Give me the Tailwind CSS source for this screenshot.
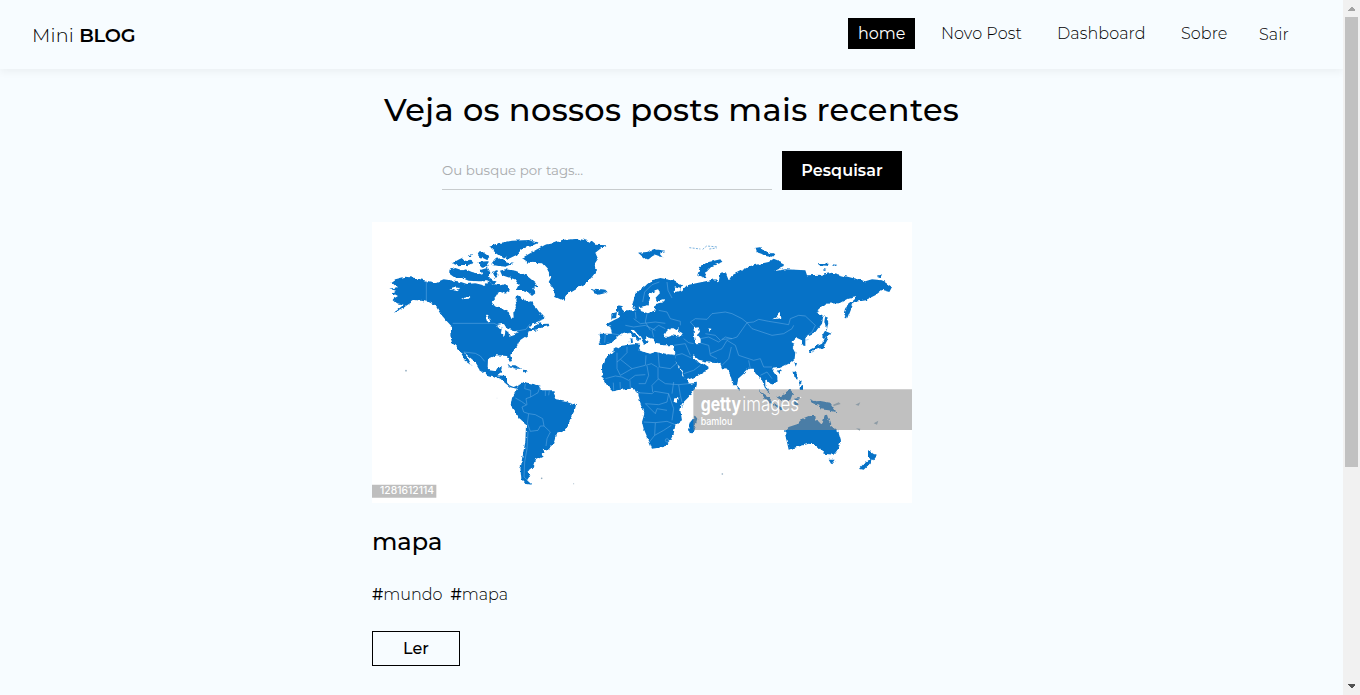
<!DOCTYPE html>
<html lang="pt-BR">
<head>
<meta charset="utf-8">
<title>Mini Blog</title>
<script src="https://cdn.jsdelivr.net/npm/@tailwindcss/browser@4"></script>
</head>
<body class="flex h-[695px] w-[1360px] overflow-hidden bg-[#f7fcff] font-[Montserrat,Inter,sans-serif] text-black">
<div class="flex h-full w-[1343px] flex-col">
  <header class="flex h-[69px] shrink-0 justify-between pr-[54px] pl-8 shadow-[0_3px_8px_rgba(0,0,0,0.05)]">
    <a class="mt-[23px] h-6 text-[19.2px] leading-6 font-light whitespace-pre"><span class="tracking-[0.2px]">Mini </span><span class="font-semibold tracking-[-0.2px]">BLOG</span></a>
    <nav class="flex pt-[18px] text-base leading-[31px] font-light tracking-[0.08px] whitespace-nowrap">
      <a class="h-[31px] w-[67px] bg-black pl-2.5 font-normal tracking-normal text-white"><span>home</span></a>
      <a class="ml-[26px] w-[116px]"><span>Novo Post</span></a>
      <a class="w-[124px]"><span>Dashboard</span></a>
      <a class="w-[78px]"><span>Sobre</span></a>
      <a class="mt-px w-[30px]"><span>Sair</span></a>
    </nav>
  </header>
  <main class="flex flex-col pl-[372px]">
    <h1 class="mt-[21px] ml-3 h-10 text-[32px] leading-10 font-medium tracking-[0.33px] whitespace-nowrap"><span>Veja os nossos posts mais recentes</span></h1>
    <form class="mt-[21px] ml-[70px] flex h-[39px] gap-2.5">
      <div class="w-[330px] border-b border-[#c8ccce] text-[13.33px] leading-[38px] text-[#a9abad]"><span>Ou busque por tags...</span></div>
      <button type="button" class="w-[120px] bg-black text-base font-semibold tracking-[0.08px] text-white"><span>Pesquisar</span></button>
    </form>
    <article class="mt-8 flex flex-col">
      <svg class="h-[281px] w-[540px]" viewBox="0 0 1620 843">
        <defs><filter id="coast" x="0" y="0" width="1620" height="843" filterUnits="userSpaceOnUse" color-interpolation-filters="sRGB"><feTurbulence type="fractalNoise" baseFrequency=".07" numOctaves="2" seed="4"/><feDisplacementMap in="SourceGraphic" scale="12" xChannelSelector="R" yChannelSelector="G"/><feGaussianBlur stdDeviation="1"/></filter></defs>
        <rect width="1620" height="843" fill="#fff"/>
        <g fill="#0672c7" filter="url(#coast)">
          <path d="M70 172L100 164 130 168 163 176 190 182 215 172 235 175 260 178 285 186 310 184 335 190 350 180 365 186 385 190 400 186 410 200 400 215 380 208 372 222 358 238 365 250 392 262 410 270 418 290 425 290 424 268 435 255 430 235 432 218 450 226 462 240 478 238 488 250 500 268 520 290 500 298 480 306 470 316 480 322 500 300 512 306 530 305 532 312 505 318 490 326 470 328 466 340 445 354 438 370 420 388 415 400 420 417 413 419 405 402 375 400 360 406 348 412 347 435 352 445 372 448 378 438 390 436 385 452 375 460 405 462 405 478 412 490 425 495 440 488 434 500 415 496 400 484 385 470 370 464 345 458 325 445 310 420 300 412 275 390 290 412 298 428 280 415 262 385 240 362 235 340 238 312 222 295 205 275 190 250 170 240 130 234 105 250 85 265 65 272 95 248 75 244 62 232 78 222 60 212 72 206 52 200 75 196 58 180Z"/>
          <path d="M232 145L250 138 270 145 280 142 300 150 325 156 350 166 375 180 362 186 345 178 318 178 290 176 270 168 250 168 232 155ZM240 124L262 112 275 106 280 116 300 120 290 128 255 130ZM276 122L300 114 308 124 285 130ZM288 100L300 96 294 106ZM314 92L332 90 352 104 345 114 325 104ZM316 120L345 118 350 132 330 134ZM325 144L345 138 355 155 350 168 332 160ZM358 128L372 110 390 108 402 120 424 126 402 134 380 132ZM360 150L376 144 380 160 368 168ZM352 74L380 64 420 56 470 54 500 62 478 72 450 80 435 98 410 110 390 104 372 92 360 84ZM384 146L400 142 430 146 455 156 470 166 490 182 496 194 484 198 490 214 480 222 465 208 450 204 432 204 440 188 428 172 408 166 390 160ZM388 198L402 190 414 204 400 212Z"/>
          <path d="M450 108L490 85 520 68 545 64 570 54 620 50 660 60 670 68 705 70 685 80 670 92 678 110 665 130 675 145 660 165 640 185 610 200 590 212 575 236 550 225 545 200 530 180 538 165 525 140 510 124 470 122ZM660 205L672 200 700 203 706 209 698 214 680 218 664 213ZM798 92L825 90 845 82 880 86 860 92 872 106 850 98 842 102 830 112 822 112ZM976 158L988 130 1010 120 1045 112 1052 121 1020 132 1006 147 998 167Z"/>
          <path d="M785 235L790 215 815 195 840 175 865 168 900 175 930 190 925 200 905 195 910 210 930 205 945 190 965 185 990 180 1030 172 1040 180 1045 152 1060 150 1070 175 1080 160 1110 145 1135 132 1190 120 1205 110 1235 122 1235 135 1205 148 1240 142 1300 145 1305 160 1350 158 1380 152 1430 165 1480 178 1500 172 1530 175 1560 195 1552 210 1530 204 1510 220 1480 235 1445 240 1435 265 1425 290 1416 275 1420 255 1445 235 1455 225 1430 230 1405 244 1360 245 1340 265 1333 270 1355 280 1350 305 1330 330 1310 340 1300 350 1300 372 1290 370 1290 355 1275 348 1258 360 1268 366 1262 375 1270 390 1268 410 1250 425 1225 437 1200 440 1215 462 1217 475 1205 488 1195 485 1180 470 1180 490 1195 515 1185 510 1175 485 1165 465 1155 460 1145 440 1130 440 1115 455 1098 470 1095 492 1085 493 1075 460 1065 440 1050 438 1045 425 1030 420 1000 418 980 413 965 400 962 405 982 426 992 422 1010 435 1005 445 975 463 942 475 935 455 920 430 908 415 905 392 905 370 875 370 850 365 845 350 820 345 830 362 815 365 805 345 785 323 775 325 805 350 798 358 785 345 765 330 745 335 735 345 715 362 700 368 680 366 685 352 683 335 720 335 715 315 700 308 725 295 745 285 760 265 790 265 780 250Z"/>
          <path d="M735 250L747 252 754 270 767 285 760 293 735 296 745 282 735 265ZM718 275L735 270 732 288 718 290ZM773 350L781 348 783 362 774 364ZM1148 78L1168 75 1172 84 1184 90 1208 96 1200 104 1180 102 1168 95 1152 90ZM1338 123L1370 125 1366 134 1342 133ZM1380 127L1396 129 1384 135ZM1354 141L1364 144 1356 147ZM1514 161L1530 157 1526 166ZM1360 278L1369 300 1364 328 1357 300ZM1310 385L1335 372 1350 365 1358 350 1350 342 1358 328 1376 335 1360 345 1366 355 1354 377 1325 385 1314 393Z"/>
          <path d="M725 385L745 372 790 366 805 368 800 385 835 395 855 388 880 395 905 398 912 420 925 445 945 475 950 485 975 482 972 495 950 525 930 545 925 565 930 595 910 610 905 635 895 655 875 675 840 680 832 660 815 620 810 600 817 575 805 545 800 520 797 508 780 500 745 503 725 508 705 490 692 468 690 440 700 410ZM955 637L948 620 955 600 970 582 976 590 962 636Z"/>
          <path d="M440 490L455 480 480 485 500 490 510 505 545 505 545 512 555 535 585 540 612 550 608 565 595 590 590 610 575 628 555 635 550 655 540 670 525 683 512 680 518 690 510 702 490 712 482 735 470 745 475 760 465 775 480 788 460 785 448 772 445 740 452 700 460 660 462 608 440 590 428 565 416 550 420 528 430 510ZM406 430L430 430 448 441 425 439ZM450 443L470 445 462 454ZM1096 492L1104 500 1098 507Z"/>
          <path d="M1240 625L1250 615 1275 607 1290 590 1310 582 1330 582 1332 595 1350 606 1358 580 1365 578 1375 610 1400 630 1407 655 1398 680 1385 698 1355 695 1345 680 1335 670 1310 665 1275 675 1250 683 1246 665 1240 640ZM1370 713L1388 713 1378 727ZM1488 680L1500 695 1515 698 1502 714 1488 708ZM1499 709L1496 722 1475 743 1461 740 1478 722ZM1158 503L1187 523 1204 547 1190 542ZM1216 527L1240 515 1256 501 1264 510 1255 534 1230 537ZM1195 540L1235 559 1230 568ZM1313 531L1330 538 1345 537 1375 542 1394 571 1370 565 1345 562 1342 548 1325 545ZM1266 530L1284 528 1273 540 1280 552 1267 552ZM1265 448L1278 455 1276 470 1267 464ZM1278 474L1290 482 1283 489ZM1282 495L1293 488 1293 504 1284 504ZM1214 446L1227 442 1222 454ZM1267 420L1275 424 1271 434Z"/>
        </g>
        <g fill="#fff" filter="url(#coast)">
          <path d="M849 205L858 202 865 212 848 230 853 238 876 232 878 240 852 246 846 266 828 274 808 268 800 256 828 250 836 234 832 218ZM885 326L900 318 910 324 920 316 918 326 932 334 925 344 900 340 885 345 877 340ZM965 318L980 316 984 330 974 336 986 350 986 363 970 364 966 344ZM806 368L815 366 835 372 860 375 905 370 910 392 880 398 850 389 832 394 800 385ZM1228 288L1204 292 1216 284 1222 268Z"/>
          <path d="M372 310L390 306 402 314 418 320 426 328 437 326 430 338 412 344 408 330 400 324 398 342 390 334 392 320ZM341 276L349 280 355 298 348 298ZM266 232L280 224 298 222 290 230ZM232 200L248 196 262 198 250 206ZM1006 319L1015 320 1012 330ZM906 530L920 527 915 542 905 541Z"/>
        </g>
        <g fill="none" stroke="#6db0e6" stroke-width="2" stroke-opacity=".75" stroke-linejoin="round">
          <path d="M163 176V238M242 304H366L380 310M430 328L462 322 474 306M275 390L310 394 325 402 338 418"/>
          <path d="M460 485L458 500 476 505 476 525 462 530 465 548 450 555 455 570 470 575 490 578 512 590 516 612 535 630 525 650 522 672M430 528L448 538 462 548M470 575L466 604 475 628 498 625 505 612 516 612M468 628L465 680 458 720 456 765 470 778M505 490L498 512 476 525M520 505L520 522M532 506L530 520"/>
          <path d="M735 392L735 440 745 460M735 420L745 412 780 440 820 430 822 400M745 460L780 440M765 374L765 392 745 412M822 430L838 425 855 435M858 390L862 435 895 440 912 425M825 432L830 460 820 485 800 485M858 435L858 470 880 485 920 488 950 485M700 470L730 462 750 465 770 475 790 460 820 458M725 504L724 482M745 500L744 480M775 500L774 475M797 512L840 515 848 508 890 515M820 545L860 548 885 540 890 515M815 600L850 602 885 598 910 608M820 545L850 575 855 560 885 565M850 602L848 640 832 660M848 640L875 625 898 610M890 515L905 560 900 595M920 488L925 520 930 540M860 470L840 490 842 510M905 480L900 515"/>
          <path d="M812 240L818 210 840 188 862 180M900 228L888 205 885 180M860 265L885 270 895 290 925 298 925 310M785 290L805 305 850 300 880 304M790 270L792 290M825 275L820 300 835 325M760 310L785 315 820 310 850 325M845 345L840 325 860 310 880 320M700 335L698 362M720 335L750 340M935 350L950 362 965 365M905 370L940 365 955 400M910 400L930 395 958 408M935 455L965 445 985 430M968 315L955 300 970 290 1005 292 1020 275 1060 270 1080 275 1110 290 1125 302 1145 300 1160 292 1190 298 1215 302 1250 308 1255 290 1280 280 1300 282 1330 310 1320 330 1300 345M1125 302L1140 320 1170 330 1200 340 1235 335 1260 320 1265 310M1125 302L1095 345 1080 350 1050 352M985 350L1010 345 1040 360 1060 345 1080 350M1000 335L1030 340 1045 355M985 363L1010 370 1015 400 1035 410M1015 395L1050 380 1065 355 1090 370 1100 400 1145 415 1165 410 1175 435 1200 435M1050 430L1070 410 1078 375M1130 415L1135 440M1165 460L1185 450 1200 470M1300 355L1310 352"/>
          <circle cx="885" cy="655" r="5"/>
        </g>
        <g fill="#8faabd"><circle cx="102" cy="446" r="2.5"/><circle cx="509" cy="769" r="2.5"/><circle cx="1051" cy="756" r="2.5"/><circle cx="605" cy="785" r="1.5"/><circle cx="375" cy="528" r="1"/></g>
        <g fill="none" stroke="#7cb3df" stroke-width="3" stroke-dasharray="6 4"><path d="M952 77L985 81M992 82L1004 72 1038 75M1012 81L1034 78"/></g>
        <path fill="#888" fill-opacity=".53" d="M964 502H1620V624H964Z"/>
        <path fill="#bebebe" d="M0 788H193V827H0Z"/>
        <g fill="#8d9ba5"><path d="M1450 548l15-7-5 10ZM1382 549l18-8 6 5-20 6ZM1505 604l14-8-4 12ZM1452 619l13 1-2 6Z"/></g>
        <g fill="#fff" font-family="Inter, sans-serif">
          <text x="986" y="566" font-size="60" font-weight="700" textLength="121" lengthAdjust="spacingAndGlyphs">getty</text>
          <text x="1111" y="566" font-size="60" font-weight="300" textLength="170" lengthAdjust="spacingAndGlyphs">images</text>
          <text x="986" y="609" font-size="29" font-weight="500" textLength="95" lengthAdjust="spacingAndGlyphs">bamlou</text>
          <circle cx="1286" cy="526" r="2"/>
          <text x="24" y="817" font-size="29" font-weight="500" textLength="162" lengthAdjust="spacingAndGlyphs">1281612114</text>
        </g>
      </svg>
      <h2 class="mt-6 h-[30px] text-2xl leading-[30px] font-medium"><span>mapa</span></h2>
      <div class="mt-7 flex h-5 gap-2 text-base leading-5 font-light">
        <p class="w-[70.5px] whitespace-nowrap"><span class="font-medium">#</span><span>mundo</span></p>
        <p class="whitespace-nowrap"><span class="font-medium">#</span><span>mapa</span></p>
      </div>
      <a class="mt-[26px] flex h-[35px] w-[88px] items-center justify-center border border-black text-base font-medium"><span>Ler</span></a>
    </article>
  </main>
</div>
<div class="flex h-full w-[17px] flex-col items-center bg-[#f1f1f1]">
  <svg class="h-[17px] w-[17px] shrink-0" viewBox="0 0 17 17" shape-rendering="crispEdges"><path fill="#a3a3a3" d="M5 11V10L8 7H9L12 10V11Z"/></svg>
  <div class="h-[450px] w-[13px] bg-[#c1c1c1]"></div>
  <svg class="mt-auto h-[17px] w-[17px] shrink-0" viewBox="0 0 17 17" shape-rendering="crispEdges"><path fill="#505050" d="M5 6V7L8 10H9L12 7V6Z"/></svg>
</div>
</body>
</html>
